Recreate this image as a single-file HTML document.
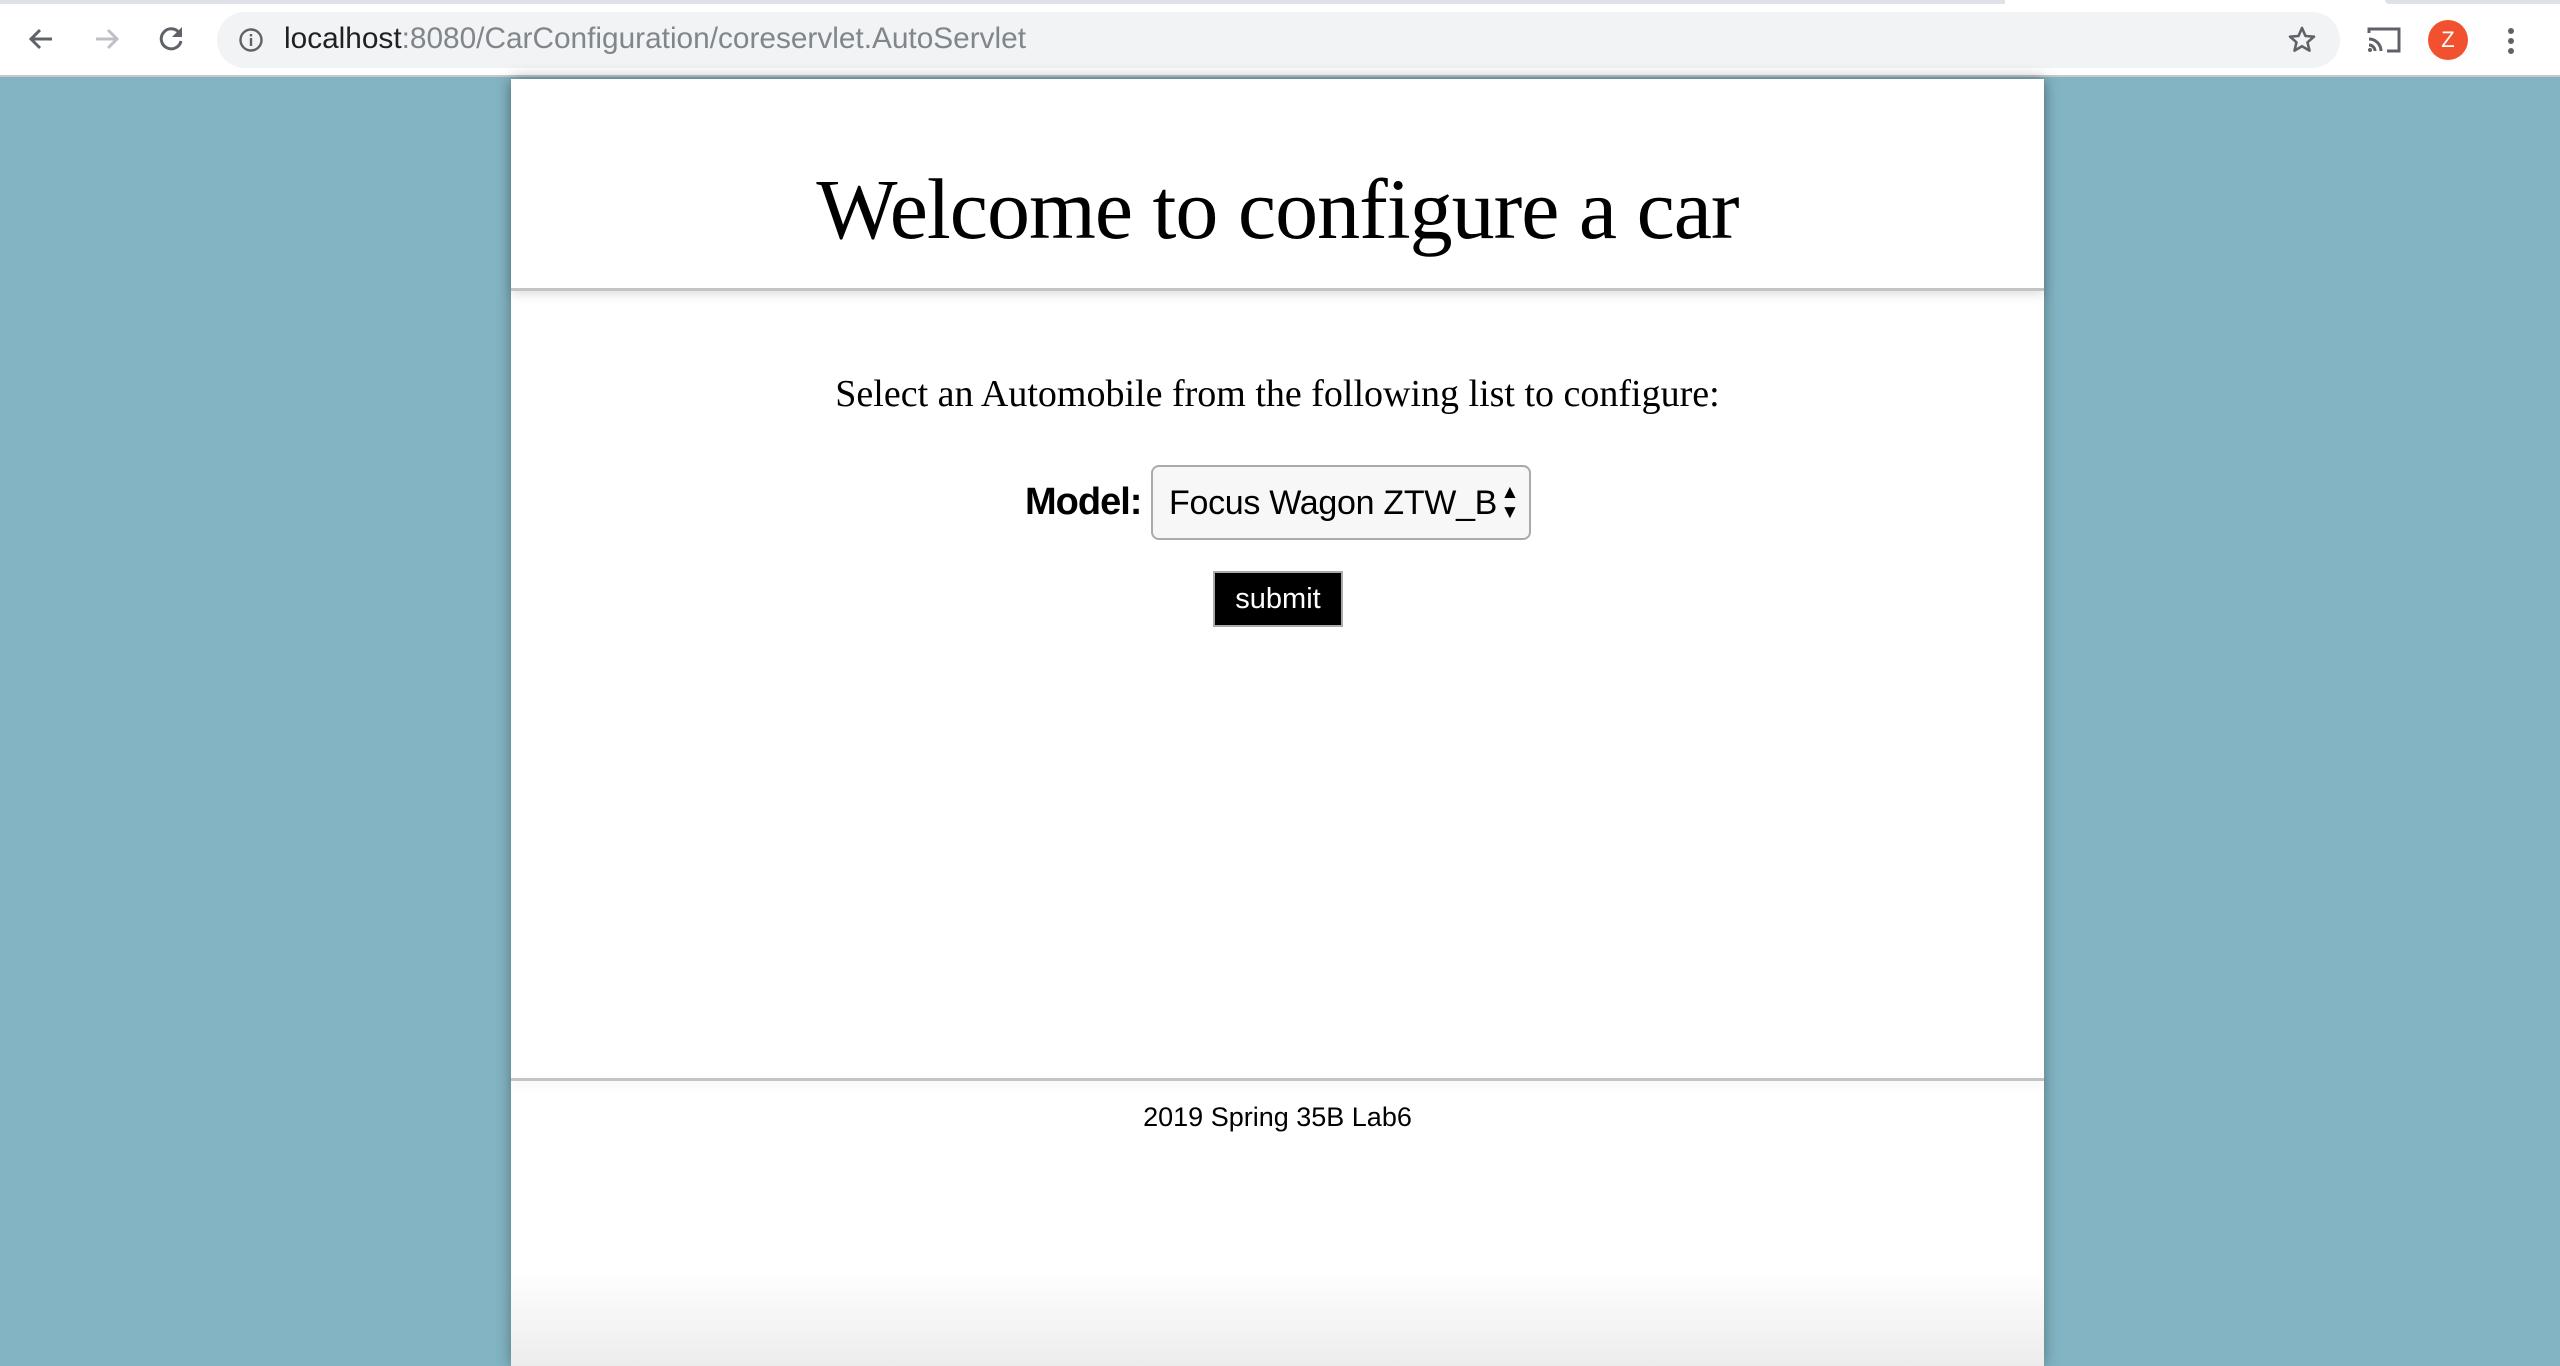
<!DOCTYPE html>
<html><head><meta charset="utf-8"><style>
*{margin:0;padding:0;box-sizing:border-box}
body{width:2560px;height:1366px;overflow:hidden;background:#82b4c3;font-family:"Liberation Sans",sans-serif;position:relative}
.tb{position:absolute;left:0;top:0;width:2560px;height:77px;background:#fff;border-bottom:2px solid #c8c8c8}
.tabedge{position:absolute;left:0;top:0;width:2005px;height:4px;background:#dee1e6}
.tabedge2{position:absolute;left:2385px;top:0;width:175px;height:4px;background:#dee1e6;border-bottom-left-radius:8px}
.addr{position:absolute;left:217px;top:12px;width:2123px;height:56px;background:#f1f3f4;border-radius:28px}
.url{position:absolute;left:284px;top:22px;font-size:29.8px;color:#80868b}
.url b{font-weight:normal;color:#202124}
.page{position:absolute;left:511px;top:79px;width:1533px;height:1287px;background:linear-gradient(#fff 0,#fff 1190px,#ececec 1287px);box-shadow:0 0 14px rgba(0,0,0,.35)}
.hdr{position:absolute;left:0;top:0;width:1533px;height:212px;border-bottom:3px solid #c4c4c4;box-shadow:0 4px 10px rgba(0,0,0,.12)}
h1{position:absolute;left:0;width:1533px;top:80px;text-align:center;font-family:"Liberation Serif",serif;font-weight:normal;font-size:86px;line-height:100px;color:#000;letter-spacing:-1px}
.sub{position:absolute;left:0;width:1533px;top:292px;text-align:center;font-family:"Liberation Serif",serif;font-size:38px;line-height:46px}
.lbl{position:absolute;left:514px;top:402px;font-size:38px;font-weight:bold;letter-spacing:-1px}
.sel{position:absolute;left:640px;top:386px;width:380px;height:75px;background:#f7f7f7;border:2px solid #aaa;border-radius:8px;font-size:34px;padding:17px 0 0 16px;letter-spacing:-.3px}
.arr{position:absolute;right:10px;top:16px;font-size:19px;line-height:20px}
.btn{position:absolute;left:702px;top:492px;width:130px;height:56px;background:#000;border:2px solid #aaa;color:#fff;font-size:29px;text-align:center;line-height:52px}
.fline{position:absolute;left:0;top:999px;width:1533px;height:3px;background:#c4c4c4;box-shadow:0 4px 10px rgba(0,0,0,.1)}
.foot{position:absolute;left:0;width:1533px;top:1020px;text-align:center;font-size:27px;line-height:36px}
</style></head><body>
<div class="tb">
<div class="tabedge"></div><div class="tabedge2"></div>
<svg style="position:absolute;left:26px;top:24px" width="30" height="30" viewBox="0 0 30 30"><path d="M26 15H5M14 6l-9 9 9 9" fill="none" stroke="#5f6368" stroke-width="3"/></svg>
<svg style="position:absolute;left:92px;top:24px" width="30" height="30" viewBox="0 0 30 30"><path d="M4 15h21M16 6l9 9-9 9" fill="none" stroke="#bdc1c6" stroke-width="3"/></svg>
<svg style="position:absolute;left:156px;top:24px" width="30" height="30" viewBox="0 0 30 30"><path d="M24 10A10 10 0 1 0 25 17" fill="none" stroke="#5f6368" stroke-width="3"/><path d="M26 3v10H16z" fill="#5f6368"/></svg>
<div class="addr"></div>
<svg style="position:absolute;left:238px;top:27px" width="26" height="26" viewBox="0 0 26 26"><circle cx="13" cy="13" r="10.5" fill="none" stroke="#5f6368" stroke-width="2.4"/><rect x="11.8" y="11" width="2.4" height="8" fill="#5f6368"/><rect x="11.8" y="7" width="2.4" height="2.4" fill="#5f6368"/></svg>
<div class="url"><b>localhost</b>:8080/CarConfiguration/coreservlet.AutoServlet</div>
<svg style="position:absolute;left:2287px;top:25px" width="30" height="30" viewBox="0 0 30 30"><path d="M15 3l3.5 8 8.5.7-6.5 5.6 2 8.3L15 21.2 7.5 25.6l2-8.3L3 11.7l8.5-.7z" fill="none" stroke="#5f6368" stroke-width="2.6" stroke-linejoin="round"/></svg>
<svg style="position:absolute;left:2366px;top:26px" width="36" height="28" viewBox="0 0 36 28"><path d="M3 7V3h30v22H21" fill="none" stroke="#5f6368" stroke-width="3"/><path d="M3 13a12 12 0 0 1 12 12M3 19a6 6 0 0 1 6 6" fill="none" stroke="#5f6368" stroke-width="3"/><circle cx="4" cy="24" r="2" fill="#5f6368"/></svg>
<div style="position:absolute;left:2428px;top:20px;width:40px;height:40px;border-radius:50%;background:#f1512f;color:#fff;font-size:22px;text-align:center;line-height:40px">Z</div>
<div style="position:absolute;left:2508px;top:28px;width:6px;height:6px;border-radius:50%;background:#5f6368;box-shadow:0 10px 0 #5f6368,0 20px 0 #5f6368"></div>
</div>
<div class="page">
<div class="hdr"><h1>Welcome to configure a car</h1></div>
<div class="sub">Select an Automobile from the following list to configure:</div>
<div class="lbl">Model:</div>
<div class="sel">Focus Wagon ZTW_B<div class="arr">▲<br>▼</div></div>
<div class="btn">submit</div>
<div class="fline"></div>
<div class="foot">2019 Spring 35B Lab6</div>
</div>
</body></html>
